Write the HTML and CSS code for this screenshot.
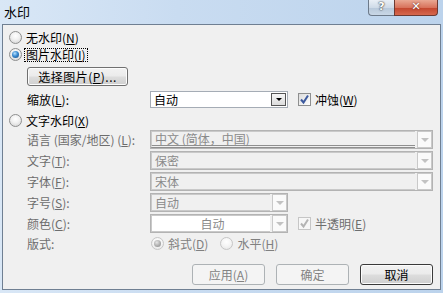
FILE: index.html
```html
<!DOCTYPE html>
<html>
<head>
    <title>水印</title>
    <link rel="stylesheet" href="styles.css">
</head>
<body>
    <div class="window">
        <div class="titlebar">
            <span class="title">水印</span>
            <div class="caption">
                <span class="cap-help">?</span>
                <span class="cap-close">✕</span>
            </div>
        </div>

        <div class="client">
            <div class="opt">
                <span class="radio"></span>
                <span>无水印(<u>N</u>)</span>
            </div>
            <div class="opt second">
                <span class="radio checked"></span>
                <span class="focus">图片水印(<u>I</u>)</span>
            </div>
            <div class="pick-row">
                <span class="btn pick">选择图片(<u>P</u>)...</span>
            </div>

            <div class="field scale-row">
                <span class="label">缩放(<u>L</u>):</span>
                <div class="combo short active">
                    <span class="val">自动</span>
                    <span class="arrow"><i></i></span>
                </div>
                <span class="check on"><svg width="11" height="11" viewBox="0 0 11 11"><path d="M2 5.5 L4.5 8.5 L9 1.5" fill="none" stroke="#3d5a9e" stroke-width="2"/></svg></span>
                <span>冲蚀(<u>W</u>)</span>
            </div>

            <div class="opt text-opt">
                <span class="radio"></span>
                <span>文字水印(<u>X</u>)</span>
            </div>

            <div class="field off first">
                <span class="label">语言 (国家/地区) (<u>L</u>):</span>
                <div class="combo wide">
                    <span class="val lang">中文 (简体，中国)</span>
                    <span class="arrow"><i></i></span>
                </div>
            </div>
            <div class="field off">
                <span class="label">文字(<u>T</u>):</span>
                <div class="combo wide">
                    <span class="val">保密</span>
                    <span class="arrow"><i></i></span>
                </div>
            </div>
            <div class="field off">
                <span class="label">字体(<u>F</u>):</span>
                <div class="combo wide">
                    <span class="val">宋体</span>
                    <span class="arrow"><i></i></span>
                </div>
            </div>
            <div class="field off">
                <span class="label">字号(<u>S</u>):</span>
                <div class="combo short">
                    <span class="val">自动</span>
                    <span class="arrow"><i></i></span>
                </div>
            </div>
            <div class="field off">
                <span class="label">颜色(<u>C</u>):</span>
                <div class="combo short">
                    <span class="val white">自动</span>
                    <span class="arrow"><i></i></span>
                </div>
                <span class="check"><svg width="11" height="11" viewBox="0 0 11 11"><path d="M2 5.5 L4.5 8.5 L9 1.5" fill="none" stroke="#b4b4b4" stroke-width="2"/></svg></span>
                <span>半透明(<u>E</u>)</span>
            </div>
            <div class="field off layout-row">
                <span class="label">版式:</span>
                <span class="radio checked grey"></span>
                <span class="radio-text">斜式(<u>D</u>)</span>
                <span class="radio grey"></span>
                <span class="radio-text">水平(<u>H</u>)</span>
            </div>

            <div class="buttons">
                <span class="btn disabled">应用(<u>A</u>)</span>
                <span class="btn disabled">确定</span>
                <span class="btn default">取消</span>
            </div>
        </div>
    </div>
</body>
</html>
```

FILE: styles.css
```css
body {
    margin: 0;
    font-family: "Noto Sans CJK SC", "Liberation Sans", sans-serif;
    font-size: 12px;
    line-height: 15px;
    color: #000;
}
u {
    text-decoration: underline;
    text-underline-offset: 1px;
}
.window {
    width: 443px;
    height: 293px;
    box-sizing: border-box;
    padding: 0 2px 3px 2px;
    display: flex;
    flex-direction: column;
    background: linear-gradient(90deg, #d9e7f6 0%, #c9dcf1 40%, #bcd3ec 100%);
}
.titlebar {
    height: 24px;
    display: flex;
    flex-shrink: 0;
}
.title {
    padding: 3px 0 0 2px;
    font-size: 13px;
    line-height: 17px;
}
.caption {
    margin-left: auto;
    margin-right: 3px;
    display: flex;
    height: 16px;
}
.cap-help {
    width: 26px;
    box-sizing: border-box;
    border: 1px solid #6d7a8a;
    border-top: none;
    border-right: none;
    border-radius: 0 0 0 4px;
    background: linear-gradient(#e9eff6, #cfdbe8 50%, #b7c8da 51%, #c9d7e6);
    color: #fff;
    text-shadow: 0 0 2px #333, 0 0 1px #333;
    font-family: "DejaVu Sans", sans-serif;
    font-weight: bold;
    font-size: 11px;
    text-align: center;
    line-height: 14px;
}
.cap-close {
    width: 44px;
    box-sizing: border-box;
    border: 1px solid #6d3a32;
    border-top: none;
    border-radius: 0 0 4px 0;
    background: linear-gradient(#e9a893, #d8735c 50%, #c2452d 51%, #d6684e);
    color: #fff;
    text-shadow: 0 0 2px #4a1a10;
    font-family: "DejaVu Sans", sans-serif;
    font-weight: bold;
    font-size: 11px;
    text-align: center;
    line-height: 14px;
}
.client {
    flex: 1;
    border: 1px solid #6f7f92;
    background: #f0f0f0;
    padding: 5px 0 0 6px;
}
.opt {
    display: flex;
    align-items: center;
    height: 15px;
}
.opt.second {
    margin-top: 2px;
}
.radio {
    width: 13px;
    height: 13px;
    box-sizing: border-box;
    border-radius: 50%;
    border: 1px solid #8e8f8f;
    background: radial-gradient(circle at 50% 35%, #ffffff 0%, #f0f0f0 45%, #cfcfcf 100%);
    margin-right: 4px;
    flex-shrink: 0;
    position: relative;
}
.radio.checked::after {
    content: "";
    position: absolute;
    left: 2px;
    top: 2px;
    width: 7px;
    height: 7px;
    border-radius: 50%;
    background: radial-gradient(circle at 40% 35%, #b8e2ff 0%, #3a8ad0 45%, #14487f 100%);
}
.radio.grey {
    border-color: #c6c6c6;
    background: radial-gradient(circle at 50% 35%, #ffffff 0%, #f4f4f4 50%, #e2e2e2 100%);
}
.radio.grey.checked::after {
    background: radial-gradient(circle at 40% 35%, #e6e6e6 0%, #a8a8a8 60%, #8a8a8a 100%);
}
.focus {
    margin-left: -2px;
    padding: 0 1px;
    border: 1px dotted #000;
    line-height: 12px;
}
.pick-row {
    margin-top: 5px;
    padding-left: 18px;
    display: flex;
}
.btn {
    display: flex;
    align-items: center;
    justify-content: center;
    box-sizing: border-box;
    border: 1px solid #707070;
    border-radius: 3px;
    background: linear-gradient(#f2f2f2, #ebebeb 48%, #dddddd 52%, #cfcfcf);
    box-shadow: inset 0 0 0 1px #fcfcfc;
}
.pick {
    width: 101px;
    height: 19px;
    letter-spacing: 0.5px;
}
.field {
    display: flex;
    align-items: center;
    margin-top: 2px;
    padding-left: 18px;
    height: 19px;
}
.label {
    width: 123px;
    flex-shrink: 0;
    white-space: nowrap;
}
.scale-row {
    margin-top: 5px;
    height: 17px;
}
.text-opt {
    margin-top: 5px;
}
.field.first {
    margin-top: 2px;
}
.off {
    color: #6d6d6d;
}
.combo {
    display: flex;
    box-sizing: border-box;
    height: 19px;
    border: 1px solid #b3b3b3;
    background: #f0f0f0;
    color: #8a8a8a;
}
.combo.wide {
    width: 283px;
}
.combo.short {
    width: 138px;
}
.combo .val {
    flex: 1;
    padding-left: 3px;
    line-height: 16px;
    border: 1px solid #c9c9c9;
    border-right: none;
    white-space: nowrap;
}
.combo .val.lang {
    border-bottom: 3px double #8f8f8f;
    line-height: 14px;
}
.combo .val.white {
    background: #fff;
    text-align: center;
}
.combo .arrow {
    width: 15px;
    margin-left: 2px;
    box-sizing: border-box;
    border: 1px solid #c9c9c9;
    background: #fafafa;
    display: flex;
    align-items: center;
    justify-content: center;
}
.combo .arrow i {
    width: 0;
    height: 0;
    border-left: 4px solid transparent;
    border-right: 4px solid transparent;
    border-top: 4px solid #c2c2c2;
}
.combo.active {
    height: 17px;
    border-color: #a5acb5;
    background: #fff;
    color: #000;
}
.combo.active .val {
    border: none;
    line-height: 15px;
}
.combo.active .arrow {
    width: 15px;
    margin: 1px 1px 1px 0;
    border: 1px solid #555;
    background: linear-gradient(#f6f6f6, #dcdcdc);
}
.combo.active .arrow i {
    border-top-color: #000;
    border-left-width: 3px;
    border-right-width: 3px;
    border-top-width: 3px;
}
.check {
    width: 13px;
    height: 13px;
    box-sizing: border-box;
    border: 1px solid #8e8f8f;
    background: linear-gradient(135deg, #dcdcdc, #ffffff);
    margin: 0 4px 0 10px;
    display: flex;
    align-items: center;
    justify-content: center;
    flex-shrink: 0;
}
.off .check {
    border-color: #c6c6c6;
    background: #f7f7f7;
}
.layout-row {
    margin-top: 3px;
    height: 15px;
}
.layout-row .label {
    width: 124px;
}
.radio-text {
    margin-right: 12px;
    color: #808080;
}
.buttons {
    margin-top: 13px;
    padding-right: 7px;
    display: flex;
    justify-content: flex-end;
    gap: 11px;
}
.buttons .btn {
    width: 73px;
    height: 21px;
}
.btn.disabled {
    border-color: #adb2b5;
    background: #f4f4f4;
    box-shadow: none;
    color: #838383;
}
.btn.default {
    border-color: #3a3a3a;
    box-shadow: inset 0 0 0 1px #fcfcfc;
}
```
